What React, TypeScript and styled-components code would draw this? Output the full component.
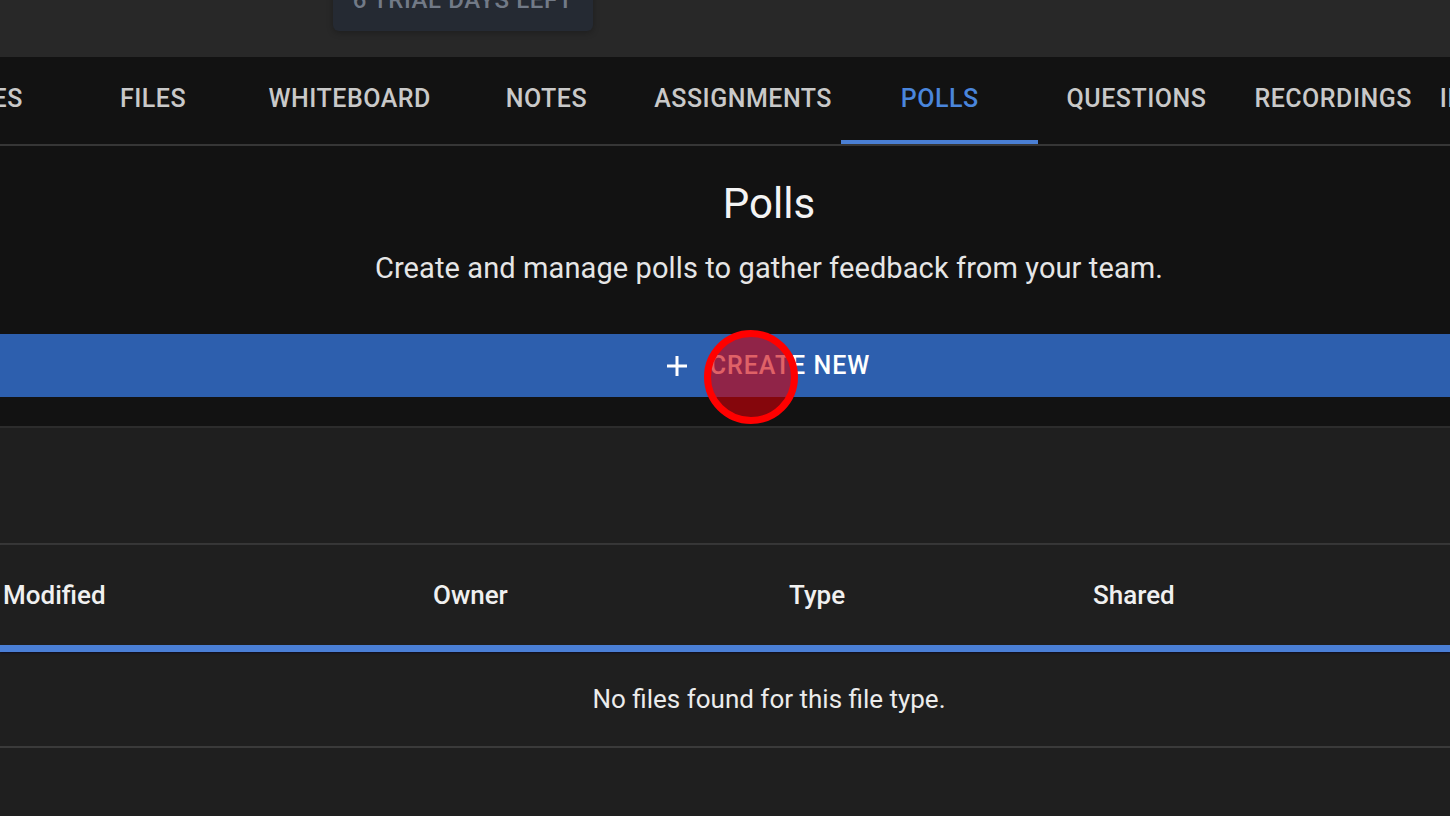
import React from "react";
import styled, { createGlobalStyle } from "styled-components";

const Global = createGlobalStyle`
  html, body { margin: 0; padding: 0; background: #1f1f1f; overflow: hidden; }
  body { font-family: Roboto, "Liberation Sans", Arial, sans-serif; -webkit-font-smoothing: antialiased; }
  * { box-sizing: border-box; }
`;

const Viewport = styled.div`
  position: relative;
  width: 1450px;
  height: 816px;
  overflow: hidden;
  background: #1f1f1f;
  display: flex;
  flex-direction: column;
`;

const TopBar = styled.div`
  height: 57px;
  flex: 0 0 57px;
  background: #282828;
  display: flex;
  align-items: flex-start;
  padding-left: 333px;
`;

const TrialBadge = styled.div`
  width: 260px;
  height: 50px;
  margin-top: -19px;
  padding-bottom: 12px;
  background: #252a33;
  border-radius: 6px;
  display: flex;
  align-items: center;
  justify-content: center;
  color: #727a87;
  font-size: 24px;
  font-weight: 500;
  letter-spacing: 0.6px;
  box-shadow: 0 2px 6px rgba(0,0,0,0.25);
`;

const TabBar = styled.div`
  height: 89px;
  flex: 0 0 89px;
  background: #121212;
  border-bottom: 2px solid #363636;
  display: flex;
  margin-left: -142px;
`;

const Tab = styled.div<{ $active?: boolean }>`
  flex: 0 0 196.7px;
  height: 87px;
  display: flex;
  align-items: center;
  justify-content: center;
  white-space: nowrap;
  font-size: 25px;
  font-weight: 500;
  letter-spacing: 0.5px;
  color: ${(p) => (p.$active ? "#4a86dc" : "#c9c9c9")};
  border-bottom: 4px solid ${(p) => (p.$active ? "#4a7fd4" : "transparent")};
`;

const Header = styled.div`
  background: #121212;
  height: 282px;
  flex: 0 0 282px;
  border-bottom: 2px solid #2c2c2c;
  display: flex;
  flex-direction: column;
`;

const Title = styled.h1`
  margin: 0;
  padding-left: 88px;
  text-align: center;
  font-size: 42px;
  font-weight: 400;
  color: #f4f4f4;
  line-height: 50px;
  margin-top: 33px;
`;

const Subtitle = styled.p`
  margin: 0;
  padding-left: 88px;
  text-align: center;
  font-size: 29px;
  font-weight: 400;
  letter-spacing: 0.1px;
  color: #e6e6e6;
  line-height: 34px;
  margin-top: 22px;
`;

const CreateButton = styled.button`
  margin-top: 49px;
  height: 63px;
  width: 100%;
  border: none;
  background: #2d5fae;
  display: flex;
  align-items: center;
  justify-content: center;
  gap: 22px;
  padding-left: 92px;
  color: #ffffff;
  font-family: inherit;
  font-size: 25px;
  font-weight: 500;
  letter-spacing: 1px;
`;

const Toolbar = styled.div`
  height: 117px;
  flex: 0 0 117px;
  border-bottom: 2px solid #383838;
`;

const HeadRow = styled.div`
  height: 107px;
  flex: 0 0 107px;
  display: grid;
  grid-template-columns: 430px 356px 304px 1fr;
  align-items: center;
  padding-left: 3px;
  border-bottom: 7px solid #4a7fd6;
  box-shadow: 0 1px 2px rgba(0,0,40,0.6);
`;

const HeadCell = styled.div`
  font-size: 26px;
  font-weight: 500;
  color: #f0f0f0;
`;

const EmptyRow = styled.div`
  height: 96px;
  flex: 0 0 96px;
  border-bottom: 2px solid #3a3a3a;
  display: flex;
  align-items: center;
  justify-content: center;
  padding-left: 88px;
  font-size: 26px;
  color: #ececec;
`;

const ClickMarker = styled.div`
  position: absolute;
  left: 704px;
  top: 330px;
  width: 94px;
  height: 94px;
  border-radius: 50%;
  border: 7px solid #ff0000;
  background: rgba(205, 0, 10, 0.62);
  pointer-events: none;
`;

const PlusIcon = () => (
  <svg width="22" height="22" viewBox="0 0 22 22" fill="none">
    <path d="M11 1v20M1 11h20" stroke="#ffffff" strokeWidth="3" />
  </svg>
);

const tabs = ["MESSAGES", "FILES", "WHITEBOARD", "NOTES", "ASSIGNMENTS", "POLLS", "QUESTIONS", "RECORDINGS", "INTEGRATIONS"];

export default function App() {
  return (
    <>
      <Global />
      <Viewport>
        <TopBar>
          <TrialBadge>6 TRIAL DAYS LEFT</TrialBadge>
        </TopBar>
        <TabBar>
          {tabs.map((t) => (
            <Tab key={t} $active={t === "POLLS"}>{t}</Tab>
          ))}
        </TabBar>
        <Header>
          <Title>Polls</Title>
          <Subtitle>Create and manage polls to gather feedback from your team.</Subtitle>
          <CreateButton>
            <PlusIcon />
            <span>CREATE NEW</span>
          </CreateButton>
        </Header>
        <Toolbar />
        <HeadRow>
          <HeadCell>Modified</HeadCell>
          <HeadCell>Owner</HeadCell>
          <HeadCell>Type</HeadCell>
          <HeadCell>Shared</HeadCell>
        </HeadRow>
        <EmptyRow>No files found for this file type.</EmptyRow>
        <ClickMarker />
      </Viewport>
    </>
  );
}
